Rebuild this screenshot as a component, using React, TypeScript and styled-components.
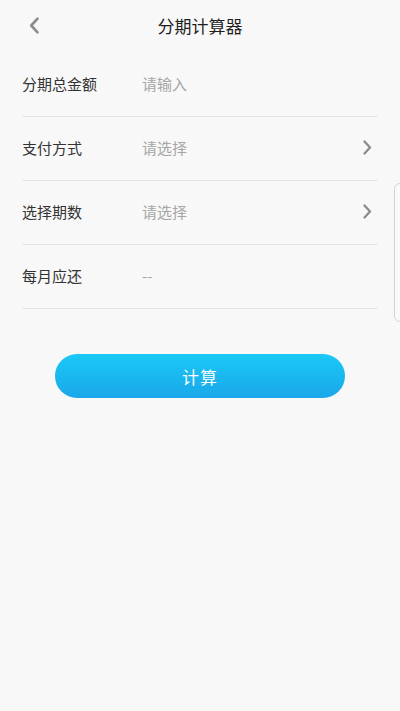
import React from "react";
import styled, { createGlobalStyle } from "styled-components";

const Global = createGlobalStyle`
  html, body { margin: 0; padding: 0; background: #f8f8f8; }
  body { font-family: "Noto Sans CJK SC", "Noto Sans", sans-serif; }
`;

const Page = styled.div`
  position: relative;
  width: 400px;
  height: 711px;
  background: #f8f8f8;
  overflow: hidden;
`;

const Header = styled.div`
  position: relative;
  height: 53px;
  display: flex;
  align-items: center;
  justify-content: center;
`;

const Back = styled.button`
  position: absolute;
  left: 22px;
  top: 12px;
  width: 24px;
  height: 26px;
  border: none;
  background: transparent;
  padding: 0;
  display: flex;
  align-items: center;
  justify-content: center;
`;

const Title = styled.div`
  font-size: 17px;
  color: #1e1e1e;
  font-weight: 400;
  margin-top: -3px;
`;

const List = styled.div`
  padding: 0 22px;
`;

const Row = styled.div`
  height: 63px;
  display: flex;
  align-items: center;
  border-bottom: 1px solid #e6e6e6;
`;

const Label = styled.div`
  width: 120px;
  font-size: 15px;
  color: #333;
  margin-top: -2px;
`;

const Value = styled.div`
  flex: 1;
  font-size: 15px;
  color: #a6a6a6;
  margin-top: -2px;
`;

const Arrow = styled.div`
  width: 14px;
  display: flex;
  justify-content: flex-end;
  margin-right: 6px;
  margin-top: -2px;
`;

const ButtonWrap = styled.div`
  display: flex;
  justify-content: center;
  padding-top: 45px;
`;

const CalcButton = styled.button`
  width: 290px;
  height: 44px;
  border: none;
  border-radius: 22px;
  background: linear-gradient(180deg, #1ac9f6 0%, #1aa7e9 100%);
  color: #fff;
  font-family: "Noto Sans CJK SC", "Noto Sans", sans-serif;
  font-size: 17px;
  letter-spacing: 1px;
  padding: 0;
`;

const EdgeHandle = styled.div`
  position: absolute;
  right: -6px;
  top: 183px;
  width: 10px;
  height: 137px;
  border: 1px solid #d4d4d4;
  border-radius: 6px;
  background: #fafafa;
`;

const Chevron = ({ dir, color, size }: { dir: "left" | "right"; color: string; size: number }) => (
  <svg width={size * 0.6} height={size} viewBox="0 0 9 15" fill="none">
    <path
      d={dir === "left" ? "M7.5 1.5 L2 7.5 L7.5 13.5" : "M1.5 1.5 L7 7.5 L1.5 13.5"}
      stroke={color}
      strokeWidth="2.3"
      strokeLinecap="round"
      strokeLinejoin="round"
    />
  </svg>
);

const rows: { label: string; value: string; arrow?: boolean }[] = [
  { label: "分期总金额", value: "请输入" },
  { label: "支付方式", value: "请选择", arrow: true },
  { label: "选择期数", value: "请选择", arrow: true },
  { label: "每月应还", value: "--" },
];

export default function App() {
  return (
    <Page>
      <Global />
      <Header>
        <Back aria-label="back">
          <Chevron dir="left" color="#8c8c8c" size={17} />
        </Back>
        <Title>分期计算器</Title>
      </Header>
      <List>
        {rows.map((r) => (
          <Row key={r.label}>
            <Label>{r.label}</Label>
            <Value>{r.value}</Value>
            {r.arrow && (
              <Arrow>
                <Chevron dir="right" color="#8c8c8c" size={15} />
              </Arrow>
            )}
          </Row>
        ))}
      </List>
      <ButtonWrap>
        <CalcButton>计算</CalcButton>
      </ButtonWrap>
      <EdgeHandle />
    </Page>
  );
}
